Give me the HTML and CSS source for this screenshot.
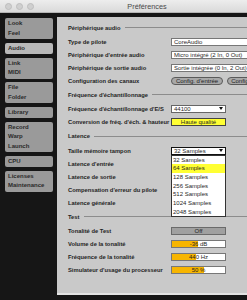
FILE: index.html
```html
<!DOCTYPE html>
<html lang="fr">
<head>
    <meta charset="UTF-8">
    <title>Préférences</title>
    <link rel="stylesheet" href="styles.css">
</head>
<body>
<div class="window">
    <div class="titlebar">
        <div class="lights">
            <span class="light"></span>
            <span class="light"></span>
            <span class="light"></span>
        </div>
        <span class="title">Préférences</span>
        <span></span>
    </div>

    <div class="main">
        <nav class="sidebar">
            <div class="tab">Look<br>Feel</div>
            <div class="tab active">Audio</div>
            <div class="tab">Link<br>MIDI</div>
            <div class="tab">File<br>Folder</div>
            <div class="tab">Library</div>
            <div class="tab">Record<br>Warp<br>Launch</div>
            <div class="tab">CPU</div>
            <div class="tab">Licenses<br>Maintenance</div>
        </nav>

        <section class="panel">
            <div class="group">Périphérique audio</div>
            <div class="row">
                <span class="label">Type de pilote</span>
                <span class="field">CoreAudio</span>
            </div>
            <div class="row">
                <span class="label">Périphérique d'entrée audio</span>
                <span class="field">Micro intégré (2 In, 0 Out)</span>
            </div>
            <div class="row">
                <span class="label">Périphérique de sortie audio</span>
                <span class="field">Sortie intégrée (0 In, 2 Out)</span>
            </div>
            <div class="row">
                <span class="label">Configuration des canaux</span>
                <div class="buttons">
                    <span class="pill">Config. d'entrée</span>
                    <span class="pill">Config. de sortie</span>
                </div>
            </div>

            <div class="group">Fréquence d'échantillonnage</div>
            <div class="row">
                <span class="label">Fréquence d'échantillonnage d'E/S</span>
                <span class="select"><span>44100</span><span class="arrow"></span></span>
            </div>
            <div class="row">
                <span class="label">Conversion de fréq. d'éch. &amp; hauteur</span>
                <span class="toggle on">Haute qualité</span>
            </div>

            <div class="group latence">Latence</div>
            <div class="row">
                <span class="label">Taille mémoire tampon</span>
                <span class="select focus">
                    <span>32 Samples</span><span class="arrow"></span>
                    <span class="menu">
                        <span>32 Samples</span>
                        <span class="hl">64 Samples</span>
                        <span>128 Samples</span>
                        <span>256 Samples</span>
                        <span>512 Samples</span>
                        <span>1024 Samples</span>
                        <span>2048 Samples</span>
                    </span>
                </span>
            </div>
            <div class="row"><span class="label">Latence d'entrée</span></div>
            <div class="row"><span class="label">Latence de sortie</span></div>
            <div class="row"><span class="label">Compensation d'erreur du pilote</span></div>
            <div class="row"><span class="label">Latence générale</span></div>

            <div class="group">Test</div>
            <div class="row">
                <span class="label">Tonalité de Test</span>
                <span class="toggle off">Off</span>
            </div>
            <div class="row">
                <span class="label">Volume de la tonalité</span>
                <span class="slider" style="--v: 49%">-36 dB</span>
            </div>
            <div class="row">
                <span class="label">Fréquence de la tonalité</span>
                <span class="slider" style="--v: 46%">440 Hz</span>
            </div>
            <div class="row">
                <span class="label">Simulateur d'usage du processeur</span>
                <span class="slider" style="--v: 61%">50 %</span>
            </div>
        </section>
    </div>
</div>
</body>
</html>
```

FILE: styles.css
```css
* {
    box-sizing: border-box;
}
body {
    margin: 0;
    background: #161616;
    font-family: "Liberation Sans", Arial, sans-serif;
    color: #1f1f1f;
    overflow: hidden;
}
.window {
    width: 294px;
    height: 300px;
    display: flex;
    flex-direction: column;
}

/* barre de titre */
.titlebar {
    height: 13px;
    flex: none;
    display: grid;
    grid-template-columns: 1fr auto 1fr;
    align-items: center;
    padding: 0 5px;
    background: linear-gradient(#ededed, #dadada);
    border-bottom: 1px solid #b5b5b5;
}
.lights {
    display: flex;
    gap: 4px;
}
.light {
    width: 7px;
    height: 7px;
    border-radius: 50%;
    background: #cfcfcf;
    border: 1px solid #bdbdbd;
}
.title {
    font-size: 7.3px;
    color: #4a4a4a;
}

.main {
    flex: 1;
    display: flex;
    min-height: 0;
}

/* onglets */
.sidebar {
    width: 57px;
    flex: none;
    padding: 5px 4px 0 5px;
    display: flex;
    flex-direction: column;
    gap: 3.5px;
}
.tab {
    background: #9a9a9a;
    border-radius: 2px;
    font-size: 6px;
    font-weight: bold;
    line-height: 9.5px;
    padding: 1px 3px;
    color: #2a2a2a;
    white-space: nowrap;
}
.tab.active {
    background: #b9b9b9;
}

/* panneau audio */
.panel {
    flex: 1;
    margin: 4px 0 5px 0;
    background: #c9c9c9;
    border-bottom: 2px solid #e3e3e3;
    padding: 3px 0 0 11px;
    font-size: 5.8px;
}
.group {
    display: flex;
    align-items: center;
    height: 15px;
    font-weight: bold;
}
.group::after {
    content: "";
    flex: 1;
    height: 1px;
    margin-left: 4px;
    background: #8c8c8c;
}
.group.latence {
    height: 16px;
}
.row {
    display: grid;
    grid-template-columns: 103px 1fr;
    align-items: center;
    height: 13px;
}
.label {
    font-weight: bold;
    white-space: nowrap;
}

.field,
.pill,
.select,
.toggle,
.slider {
    font-size: 6px;
}
.field {
    width: 120px;
    height: 8px;
    line-height: 6px;
    padding-left: 2px;
    background: #fff;
    border: 1px solid #777;
    white-space: nowrap;
    overflow: hidden;
}
.buttons {
    display: flex;
    gap: 4px;
}
.pill {
    flex: none;
    width: 52px;
    height: 8px;
    line-height: 6px;
    text-align: center;
    white-space: nowrap;
    background: #a8a8a8;
    border: 1px solid #5a5a5a;
    border-radius: 4px;
}
.select {
    position: relative;
    width: 55px;
    height: 8px;
    line-height: 6px;
    display: flex;
    justify-content: space-between;
    align-items: center;
    padding: 0 2px;
    background: #fff;
    border: 1px solid #666;
}
.select.focus {
    border-color: #111;
}
.arrow {
    width: 0;
    height: 0;
    border-left: 2px solid transparent;
    border-right: 2px solid transparent;
    border-top: 3px solid #111;
}
.menu {
    position: absolute;
    top: 7px;
    left: -1px;
    width: 55px;
    display: flex;
    flex-direction: column;
    background: #fff;
    border: 1px solid #333;
    z-index: 2;
}
.menu span {
    height: 8.7px;
    line-height: 8.7px;
    padding-left: 1px;
}
.menu .hl {
    background: #ffff33;
}
.toggle {
    width: 55px;
    height: 8px;
    line-height: 6px;
    text-align: center;
    border: 1px solid #444;
}
.toggle.on {
    background: #ffff33;
}
.toggle.off {
    background: #a0a0a0;
    border-color: #6a6a6a;
}
.slider {
    width: 55px;
    height: 8px;
    line-height: 6px;
    text-align: center;
    border: 1px solid #777;
    background: linear-gradient(to right, #f7b500 var(--v), #fff var(--v));
}
```
